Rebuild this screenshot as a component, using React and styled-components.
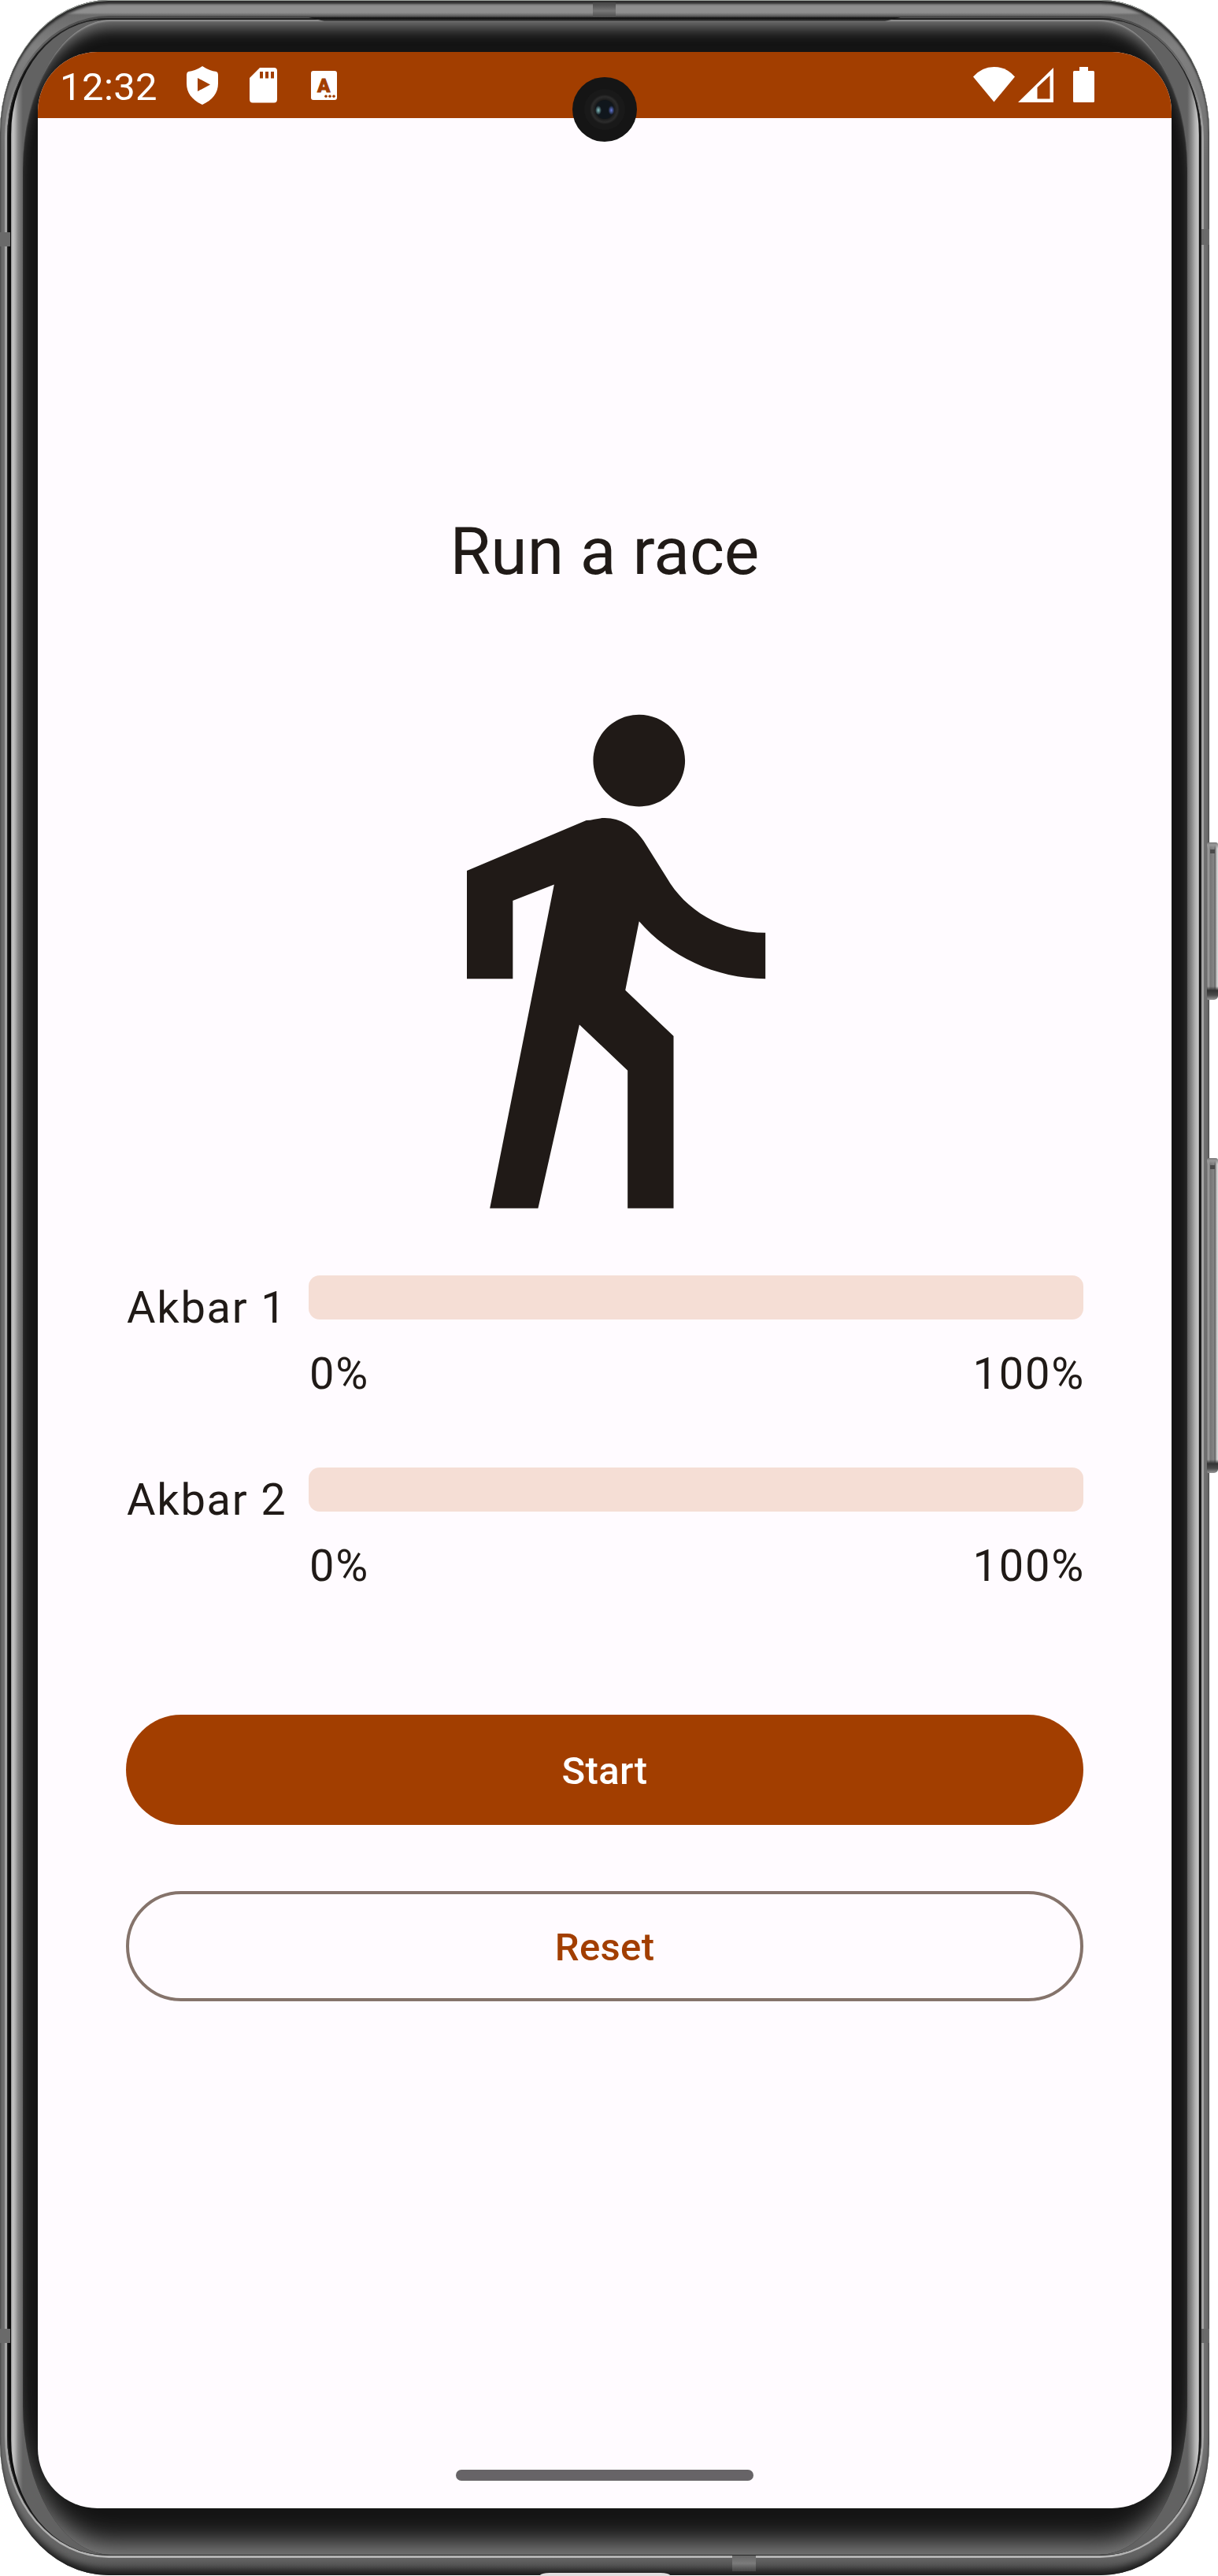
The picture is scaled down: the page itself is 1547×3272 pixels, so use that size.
import React from "react";
import styled, { createGlobalStyle } from "styled-components";

const color = {
  primary: "#a23e00",
  surface: "#fffbff",
  ink: "#201a17",
  track: "#f5ded5",
  outline: "#85736b",
  handle: "#676467",
  bezel: "#141414",
};

const GlobalStyle = createGlobalStyle`
  * { box-sizing: border-box; }
  body { margin: 0; background: #fff; }
`;

const Stage = styled.div`
  width: 1547px;
  height: 3272px;
  overflow: hidden;
  font-family: Roboto, "Liberation Sans", sans-serif;
  color: ${color.ink};
`;

const Shell = styled.div`
  position: relative;
  width: 1536px;
  height: 3271px;
  padding: 20px 7px 22px 6px;
  border-radius: 138px / 168px;
  background: linear-gradient(
    to bottom,
    #8f8f8f 0, #8f8f8f 16px, #6c6c6c 19px, #808080 60px, #717171 200px,
    #717171 3180px, #626262 3249px, #5a5a5a 3258px, #4a4a4a 3271px
  );
  box-shadow:
    inset 0 1px 0 #a4aaa4,
    inset 0 6px 3px -1px #2b2b2b,
    inset 0 -12px 10px -5px #1c1c1c,
    inset 0 0 3px #404040;
`;

const Seam = styled.div`
  height: 100%;
  padding: 3px;
  border-radius: 132px / 155px;
  background: linear-gradient(to bottom, #4b4b4b 0, #a4a4a4 150px, #a4a4a4 3100px, #b4b4b4 100%);
`;

const SeamGroove = styled.div`
  height: 100%;
  padding: 2px 3px 1px 5px;
  border-radius: 128px / 152px;
  background: #0b0b0b;
  box-shadow: inset 0 0 2px 1px #333;
`;

const GlassEdge = styled.div`
  height: 100%;
  padding: 0 15px;
  border-radius: 120px / 146px;
  background: linear-gradient(
    to right,
    #8b8b8b 0, #c6c6c6 2px, #b2b2b2 5px, #858585 9px, #626262 15px,
    #626262 calc(100% - 15px), #858585 calc(100% - 10px), #b0b0b0 calc(100% - 5px), #c8c8c8 calc(100% - 1px), #777 100%
  );
`;

const Bezel = styled.div`
  height: 100%;
  padding: 41px 20px 57px 19px;
  border-radius: 112px / 190px;
  background: ${color.bezel};
  box-shadow:
    inset 0 3px 2px -1px #929292,
    inset 0 23px 18px -12px #747474,
    inset 0 -34px 32px -18px #808080;
`;

const Screen = styled.main`
  display: flex;
  flex-direction: column;
  height: 3120px;
  border-radius: 76px;
  overflow: hidden;
  background: ${color.surface};
`;

const StatusBar = styled.header`
  display: flex;
  flex: none;
  justify-content: space-between;
  height: 84px;
  padding: 0 98px 0 28px;
  background: ${color.primary};
  color: #fff;
`;

const StatusGroup = styled.div`
  display: flex;
  align-items: flex-start;
`;

const Clock = styled.span`
  width: 128px;
  margin-top: 16px;
  font-size: 49px;
  line-height: 57px;
  letter-spacing: 0.4px;
`;

const StatusIcon = styled.svg`
  flex: none;
  display: block;
  margin-top: ${(p) => p.$top}px;
  margin-left: ${(p) => p.$gap}px;
`;

const BadgeLetter = styled.text`
  font: 900 24px Roboto, sans-serif;
  fill: ${color.primary};
  stroke: ${color.primary};
  stroke-width: 0.8px;
`;

const RaceTracker = styled.section`
  flex: 1;
  display: flex;
  flex-direction: column;
  align-items: center;
  padding: 495px 112px 0;
`;

const Title = styled.h1`
  margin: 0;
  font-size: 84px;
  font-weight: 400;
  line-height: 112px;
`;

const Walker = styled.svg`
  display: block;
  flex: none;
  width: 700px;
  height: 700px;
  margin-top: 107px;
  fill: ${color.ink};
`;

const Participants = styled.div`
  align-self: stretch;
  display: flex;
  flex-direction: column;
  gap: 76px;
  margin-top: 56px;
`;

const Participant = styled.div`
  display: flex;
  height: 168px;
  font-size: 56px;
  line-height: 82px;
  letter-spacing: 1.75px;
  white-space: nowrap;
`;

const Name = styled.span`
  flex: none;
  width: 232px;
  padding-left: 1px;
`;

const Progress = styled.div`
  flex: 1;
`;

const Track = styled.div`
  height: 56px;
  border-radius: 14px;
  background: ${color.track};
`;

const Scale = styled.div`
  display: flex;
  justify-content: space-between;
  margin: 28px -2px 0 1px;
`;

const Actions = styled.div`
  align-self: stretch;
  display: flex;
  flex-direction: column;
  gap: 84px;
  margin-top: 146px;
`;

const Button = styled.button`
  height: 140px;
  padding: 4px 0 0;
  border: ${(p) => (p.$outlined ? `4px solid ${color.outline}` : "0")};
  border-radius: 70px;
  background: ${(p) => (p.$outlined ? "transparent" : color.primary)};
  color: ${(p) => (p.$outlined ? color.primary : "#fff")};
  font: 500 49px/70px Roboto, "Liberation Sans", sans-serif;
  letter-spacing: 0.35px;
`;

const GestureBar = styled.footer`
  display: flex;
  justify-content: center;
  flex: none;
  height: 49px;
`;

const Handle = styled.div`
  width: 378px;
  height: 14px;
  border-radius: 7px;
  background: ${color.handle};
`;

const Camera = styled.svg`
  position: absolute;
  left: 727px;
  top: 98px;
`;

const Antenna = styled.div`
  position: absolute;
  left: ${(p) => p.$x}px;
  top: ${(p) => p.$y}px;
  width: ${(p) => p.$w}px;
  height: ${(p) => p.$h}px;
  background: ${(p) => p.$fill};
`;

const Lip = styled.div`
  position: absolute;
  left: 392px;
  top: 22px;
  width: 752px;
  height: 5px;
  background: linear-gradient(#0e0e0e, #222 60%, #555);
  clip-path: polygon(0 0, 100% 0, calc(100% - 20px) 100%, 20px 100%);
`;

const Port = styled.div`
  position: absolute;
  left: 686px;
  top: 3268px;
  width: 165px;
  height: 4px;
  border-radius: 12px 12px 0 0 / 3px 3px 0 0;
  background: #e2dfe0;
`;

const SideKey = styled.div`
  position: absolute;
  left: 1533px;
  top: ${(p) => p.$y}px;
  width: 14px;
  height: ${(p) => p.$h}px;
  border-radius: 2px 3px 5px 2px;
  background:
    linear-gradient(to bottom, #777 0, #999 3px, transparent 8px, transparent calc(100% - 17px), #333 calc(100% - 12px), #4a4a4a calc(100% - 6px), #999 100%),
    linear-gradient(to right, #777 0, #a2a2a2 2px, #757575 4px, #858585 9px, #5a5a5a 10px, #b8b8b8 12px, #ddd 14px);
`;

const KeyDimple = styled.div`
  width: 6px;
  height: 5px;
  margin: 9px 0 0 4px;
  background: #4a4a4a;
`;

const racers = ["Akbar 1", "Akbar 2"];

function LeftIcons() {
  return (
    <>
      <StatusIcon $top={18} $gap={33} width="40" height="49" viewBox="0 0 40 49">
        <path fill="#fff" fillRule="evenodd" d="M20 0 Q29 6 38 7 Q40 8 40 11 V22 C40 34 33 43 20 49 C7 43 0 34 0 22 V11 Q0 8 2 7 Q11 6 20 0Z M14 15 V32 L30 23.5Z" />
      </StatusIcon>
      <StatusIcon $top={20} $gap={40} width="35" height="45" viewBox="0 0 35 45">
        <path fill="#fff" fillRule="evenodd" d="M13 0 H31 Q35 0 35 4 V40 Q35 44.5 31 44.5 H4 Q0 44.5 0 40 V13Z M13 5 V13.5 H17 V5Z M20 5 V13.5 H24 V5Z M27 5 V13.5 H31 V5Z" />
      </StatusIcon>
      <StatusIcon $top={24} $gap={43} width="33" height="37" viewBox="0 0 33 37">
        <rect width="33" height="37" rx="3" fill="#fff" />
        <BadgeLetter x="16.3" y="26.5" textAnchor="middle">A</BadgeLetter>
        <g fill={color.primary}>
          <circle cx="19" cy="32.3" r="1.8" />
          <circle cx="24" cy="32.3" r="1.8" />
          <circle cx="29" cy="32.3" r="1.8" />
        </g>
      </StatusIcon>
    </>
  );
}

function RightIcons() {
  return (
    <>
      <StatusIcon $top={19} $gap={0} width="53" height="45" viewBox="0 0 53 45">
        <path fill="#fff" d="M0 12.5 Q11 0 26.5 0 Q42 0 53 12.5 L26.5 44.5Z" />
      </StatusIcon>
      <StatusIcon $top={20} $gap={4} width="45" height="44" viewBox="0 0 45 44">
        <path fill="#fff" fillRule="evenodd" d="M45 0 V44 H0Z M24.5 25 V39.5 H40.5 V10Z" />
      </StatusIcon>
      <StatusIcon $top={19} $gap={25} width="27" height="45" viewBox="0 0 27 45">
        <path fill="#fff" d="M8 0 H19 V5 H25.5 Q27 5 27 6.5 V43.5 Q27 45 25.5 45 H1.5 Q0 45 0 43.5 V6.5 Q0 5 1.5 5 H8Z" />
      </StatusIcon>
    </>
  );
}

function CameraLens() {
  return (
    <Camera width="82" height="82" viewBox="0 0 82 82">
      <defs>
        <radialGradient id="ring">
          <stop offset="0.55" stopColor="#141414" />
          <stop offset="0.85" stopColor="#2c2c2c" />
          <stop offset="1" stopColor="#191919" />
        </radialGradient>
        <radialGradient id="teal">
          <stop offset="0" stopColor="#86c4c4" />
          <stop offset="1" stopColor="#86c4c4" stopOpacity="0" />
        </radialGradient>
        <radialGradient id="blue">
          <stop offset="0" stopColor="#6478d8" />
          <stop offset="1" stopColor="#6478d8" stopOpacity="0" />
        </radialGradient>
      </defs>
      <circle cx="41" cy="41" r="41" fill="#151515" />
      <circle cx="41" cy="41" r="26" fill="#191919" />
      <circle cx="41" cy="41" r="19" fill="url(#ring)" />
      <circle cx="41" cy="41" r="12" fill="#10161c" />
      <ellipse cx="33" cy="42" rx="4" ry="6" fill="url(#teal)" />
      <ellipse cx="49.5" cy="42" rx="4" ry="6" fill="url(#blue)" />
    </Camera>
  );
}

export default function App() {
  return (
    <Stage>
      <GlobalStyle />
      <Shell>
        <Seam>
          <SeamGroove>
            <GlassEdge>
              <Bezel>
                <Screen>
                  <StatusBar>
                    <StatusGroup>
                      <Clock>12:32</Clock>
                      <LeftIcons />
                    </StatusGroup>
                    <StatusGroup>
                      <RightIcons />
                    </StatusGroup>
                  </StatusBar>
                  <RaceTracker>
                    <Title>Run a race</Title>
                    <Walker viewBox="0 0 24 24">
                      <path d="M13.5,5.5c1.1,0 2,-0.9 2,-2s-0.9,-2 -2,-2 -2,0.9 -2,2 0.9,2 2,2zM9.8,8.9L7,23h2.1l1.8,-8 2.1,2v6h2v-7.5l-2.1,-2 0.6,-3C14.8,12 16.8,13 19,13v-2c-1.9,0 -3.5,-1 -4.3,-2.4l-1,-1.6c-0.4,-0.6 -1,-1 -1.7,-1 -0.3,0 -0.5,0.1 -0.8,0.1L6,8.3V13h2V9.6l1.8,-0.7" />
                    </Walker>
                    <Participants>
                      {racers.map((name) => (
                        <Participant key={name}>
                          <Name>{name}</Name>
                          <Progress>
                            <Track />
                            <Scale>
                              <span>0%</span>
                              <span>100%</span>
                            </Scale>
                          </Progress>
                        </Participant>
                      ))}
                    </Participants>
                    <Actions>
                      <Button>Start</Button>
                      <Button $outlined>Reset</Button>
                    </Actions>
                  </RaceTracker>
                  <GestureBar>
                    <Handle />
                  </GestureBar>
                </Screen>
              </Bezel>
            </GlassEdge>
          </SeamGroove>
        </Seam>
        <CameraLens />
        <Lip />
        <Antenna $x={753} $y={3} $w={29} $h={18} $fill="linear-gradient(#444, #777 60%, #505050)" />
        <Antenna $x={930} $y={3246} $w={30} $h={20} $fill="linear-gradient(#666, #7c7c7c 50%, #444)" />
        <Antenna $x={0} $y={295} $w={13} $h={18} $fill="#6a6a6a" />
        <Antenna $x={0} $y={2958} $w={13} $h={18} $fill="#6a6a6a" />
        <Antenna $x={1526} $y={291} $w={10} $h={20} $fill="#6a6a6a" />
        <Antenna $x={1526} $y={2958} $w={10} $h={18} $fill="#6a6a6a" />
        <Port />
        <SideKey $y={1070} $h={200}><KeyDimple /></SideKey>
        <SideKey $y={1471} $h={400}><KeyDimple /></SideKey>
      </Shell>
    </Stage>
  );
}
